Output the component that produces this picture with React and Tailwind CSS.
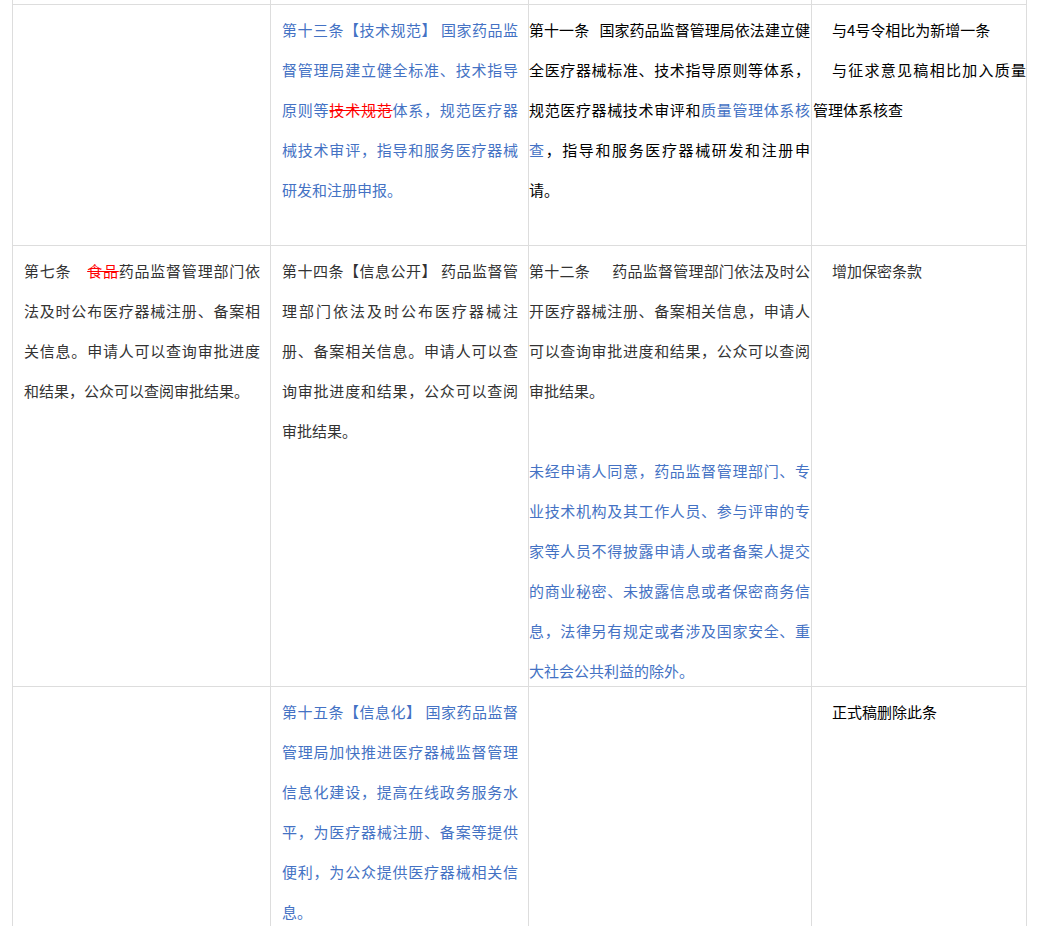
import React from 'react';

const blue = 'text-[#4472c4]';
const del = 'text-[#ff0000] line-through decoration-[#ff0000]';

const Cell = ({ className = '', children }) => (
    <div className={`bg-white pt-[5px] ${className}`}>{children}</div>
);

const Side = ({ children }) => <Cell className="pl-[11px] pr-[10px]">{children}</Cell>;
const Mid = ({ children }) => <Cell className="pl-0 pr-px">{children}</Cell>;
const Note = ({ children }) => <Cell className="pl-px pr-0">{children}</Cell>;

export default function App() {
    return (
        <div className="h-[926px] overflow-hidden bg-white pl-[12px] font-['Noto_Sans_CJK_SC',sans-serif] text-[15px] leading-[40px] text-justify">
            <div className="grid w-[1015px] grid-cols-[257px_257px_282px_214px] grid-rows-[4px_240px_440px_280px] gap-px border-x border-[#dddddd] bg-[#dddddd]">
                {/* tail of the previous row */}
                <div className="bg-white" />
                <div className="bg-white" />
                <div className="bg-white" />
                <div className="bg-white" />

                {/* row 1 */}
                <Side />
                <Side>
                    <p className={blue}>
                        第十三条【技术规范】 国家药品监督管理局建立健全标准、技术指导原则等<span className={del}>技术规范</span>体系，规范医疗器械技术审评，指导和服务医疗器械研发和注册申报。
                    </p>
                </Side>
                <Mid>
                    <p className="text-black">
                        第十一条{'\u00a0\u00a0\u00a0'}国家药品监督管理局依法建立健全医疗器械标准、技术指导原则等体系，规范医疗器械技术审评和<span className={blue}>质量管理体系核查</span>，指导和服务医疗器械研发和注册申请。
                    </p>
                </Mid>
                <Note>
                    <p className="indent-[19px] text-black">与4号令相比为新增一条</p>
                    <p className="indent-[19px] text-black">与征求意见稿相比加入质量管理体系核查</p>
                </Note>

                {/* row 2 */}
                <Side>
                    <p className="text-[#333333]">
                        第七条{'\u3000'}<span className={del}>食品</span>药品监督管理部门依法及时公布医疗器械注册、备案相关信息。申请人可以查询审批进度和结果，公众可以查阅审批结果。
                    </p>
                </Side>
                <Side>
                    <p className="text-[#333333]">
                        第十四条【信息公开】 药品监督管理部门依法及时公布医疗器械注册、备案相关信息。申请人可以查询审批进度和结果，公众可以查阅审批结果。
                    </p>
                </Side>
                <Mid>
                    <p className="text-[#333333]">
                        第十二条{'\u3000\u00a0\u00a0'}药品监督管理部门依法及时公开医疗器械注册、备案相关信息，申请人可以查询审批进度和结果，公众可以查阅审批结果。
                    </p>
                    <p>
                        <br />
                    </p>
                    <p className={blue}>
                        未经申请人同意，药品监督管理部门、专业技术机构及其工作人员、参与评审的专家等人员不得披露申请人或者备案人提交的商业秘密、未披露信息或者保密商务信息，法律另有规定或者涉及国家安全、重大社会公共利益的除外。
                    </p>
                </Mid>
                <Note>
                    <p className="indent-[19px] text-[#333333]">增加保密条款</p>
                </Note>

                {/* row 3 */}
                <Side />
                <Side>
                    <p className={blue}>
                        第十五条【信息化】 国家药品监督管理局加快推进医疗器械监督管理信息化建设，提高在线政务服务水平，为医疗器械注册、备案等提供便利，为公众提供医疗器械相关信息。
                    </p>
                </Side>
                <Mid />
                <Note>
                    <p className="indent-[19px] text-black">正式稿删除此条</p>
                </Note>
            </div>
        </div>
    );
}
